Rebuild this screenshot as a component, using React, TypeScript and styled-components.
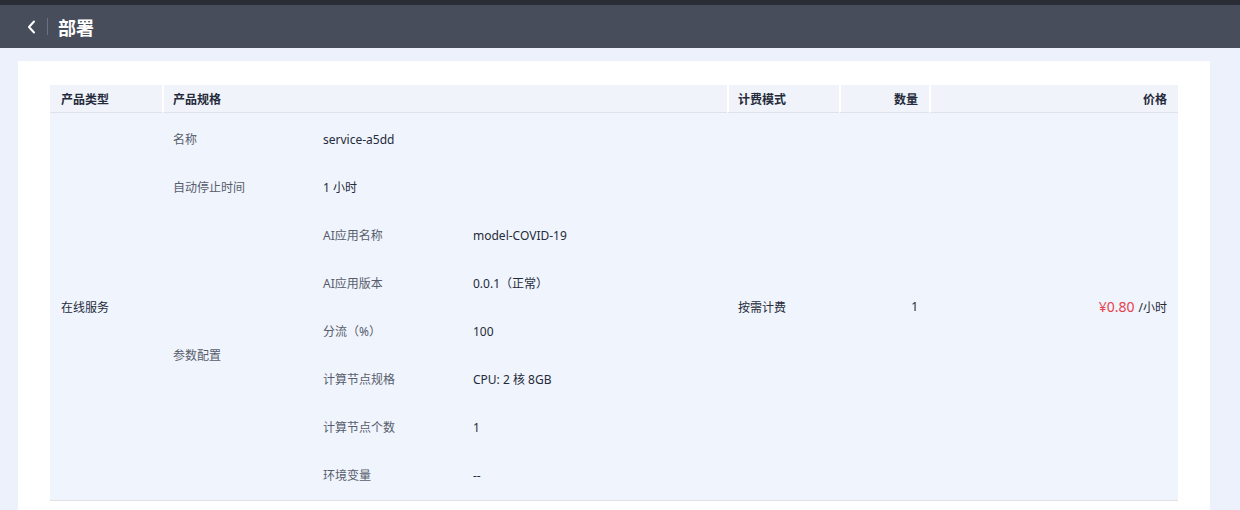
import React from 'react';
import styled, { createGlobalStyle } from 'styled-components';

const GlobalStyle = createGlobalStyle`
  body {
    margin: 0;
    background: #edf1fb;
    font-family: 'Noto Sans', 'Noto Sans CJK SC', sans-serif;
    font-size: 12px;
    color: #252b3a;
  }
`;

const TopStrip = styled.div`
  height: 5px;
  background: #2a2d36;
`;

const Header = styled.header`
  height: 43px;
  background: #474d5b;
  display: flex;
  align-items: center;
  padding-left: 24px;
`;

const BackButton = styled.button`
  display: flex;
  align-items: center;
  justify-content: center;
  width: 16px;
  height: 20px;
  padding: 0;
  border: none;
  background: none;
  cursor: pointer;
`;

const Divider = styled.span`
  width: 1px;
  height: 17px;
  background: #6b7182;
  margin: 0 10px 0 7px;
`;

const Title = styled.h1`
  margin: 0;
  font-size: 18px;
  font-weight: 700;
  color: #ffffff;
`;

const Card = styled.main`
  margin: 13px 30px 0 18px;
  background: #ffffff;
  padding: 24px 32px;
  min-height: 440px;
`;

const Grid = styled.div`
  display: grid;
  grid-template-columns: 112px 565px 112px 90px 1fr;
`;

const HeadCell = styled.div<{ $right?: boolean; $first?: boolean }>`
  height: 27px;
  display: flex;
  align-items: center;
  justify-content: ${p => (p.$right ? 'flex-end' : 'flex-start')};
  padding: ${p => (p.$first ? '0 11px' : '0 11px 0 9px')};
  background: #f0f3fa;
  border-left: ${p => (p.$first ? 'none' : '2px solid #ffffff')};
  border-bottom: 1px solid #dfe2e8;
  font-weight: 700;
  color: #252b3a;
`;

const BodyCell = styled.div<{ $right?: boolean }>`
  display: flex;
  align-items: center;
  justify-content: ${p => (p.$right ? 'flex-end' : 'flex-start')};
  padding: 0 11px;
  background: #f0f4fc;
  border-bottom: 1px solid #dfe1e6;
  min-height: 387px;
`;

const SpecCell = styled.div`
  background: #f0f4fc;
  border-bottom: 1px solid #dfe1e6;
  padding: 2px 0 1px;
`;

const SpecRow = styled.div`
  display: grid;
  grid-template-columns: 161px 1fr;
  align-items: center;
`;

const SpecLabel = styled.div`
  padding-left: 11px;
  color: #575d6c;
`;

const Pair = styled.div<{ $single?: boolean }>`
  display: grid;
  grid-template-columns: ${p => (p.$single ? '1fr' : '150px 1fr')};
  height: 48px;
  align-items: center;
`;

const Label = styled.span`
  color: #575d6c;
`;

const Value = styled.span`
  color: #252b3a;
`;

const Price = styled.span`
  color: #e5424d;
  font-size: 14px;
  margin-right: 4px;
`;

const params: [string, string][] = [
  ['AI应用名称', 'model-COVID-19'],
  ['AI应用版本', '0.0.1（正常）'],
  ['分流（%）', '100'],
  ['计算节点规格', 'CPU: 2 核 8GB'],
  ['计算节点个数', '1'],
  ['环境变量', '--'],
];

const ChevronLeft = () => (
  <svg width="12" height="14" viewBox="0 0 12 14" fill="none">
    <path d="M8 1.5 L3 7 L8 12.5" stroke="#ffffff" strokeWidth="2" strokeLinecap="round" strokeLinejoin="round" />
  </svg>
);

const App = () => {
  return (
    <>
      <GlobalStyle />
      <TopStrip />
      <Header>
        <BackButton>
          <ChevronLeft />
        </BackButton>
        <Divider />
        <Title>部署</Title>
      </Header>
      <Card>
        <Grid>
          <HeadCell $first>产品类型</HeadCell>
          <HeadCell>产品规格</HeadCell>
          <HeadCell>计费模式</HeadCell>
          <HeadCell $right>数量</HeadCell>
          <HeadCell $right>价格</HeadCell>

          <BodyCell>在线服务</BodyCell>
          <SpecCell>
            <SpecRow>
              <SpecLabel>名称</SpecLabel>
              <Pair $single>
                <Value>service-a5dd</Value>
              </Pair>
            </SpecRow>
            <SpecRow>
              <SpecLabel>自动停止时间</SpecLabel>
              <Pair $single>
                <Value>1 小时</Value>
              </Pair>
            </SpecRow>
            <SpecRow>
              <SpecLabel>参数配置</SpecLabel>
              <div>
                {params.map(([k, v]) => (
                  <Pair key={k}>
                    <Label>{k}</Label>
                    <Value>{v}</Value>
                  </Pair>
                ))}
              </div>
            </SpecRow>
          </SpecCell>
          <BodyCell>按需计费</BodyCell>
          <BodyCell $right>1</BodyCell>
          <BodyCell $right>
            <Price>¥0.80</Price>/小时
          </BodyCell>
        </Grid>
      </Card>
    </>
  );
};

export default App;
